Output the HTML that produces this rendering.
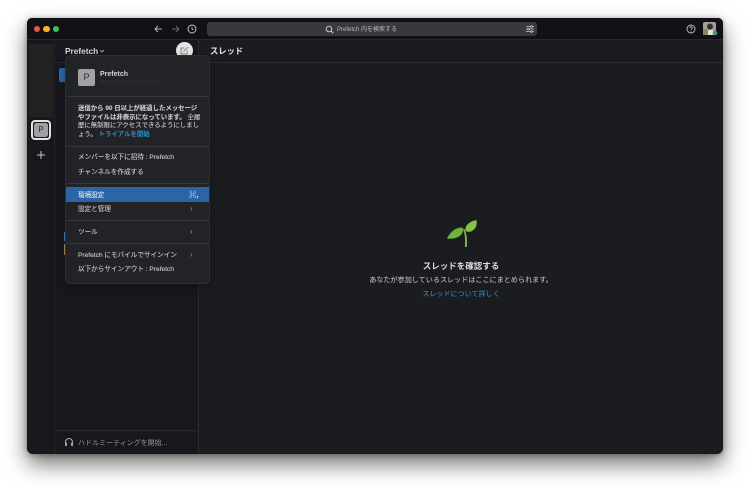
<!DOCTYPE html>
<html lang="ja"><head><meta charset="utf-8"><style>
*{box-sizing:border-box}
html,body{margin:0;padding:0;width:750px;height:489px;overflow:hidden;background:#fff}
body{font-family:"Liberation Sans","Noto Sans CJK JP",sans-serif;position:relative}
.a{position:absolute;white-space:nowrap}
#win{position:absolute;left:27px;top:18px;width:696px;height:436px;background:#1b1c20;border-radius:5px 5px 6px 6px;overflow:hidden;box-shadow:0 10px 22px rgba(0,0,0,.55),0 1px 6px rgba(0,0,0,.35)}
#root{position:absolute;left:0;top:0;width:750px;height:489px;filter:blur(.35px)}
.t{font-size:6.6px;color:#cdcdcf;line-height:10px;-webkit-text-stroke:.1px #cdcdcf}
.sep{position:absolute;left:66px;width:143px;height:1px;background:#35363a}
.ch{position:absolute;left:190px;font-size:8px;color:#9a9a9c;line-height:10px}
</style></head><body><div id="root">
<div id="win"></div>
<div class="a" style="left:27px;top:18px;width:696px;height:21px;background:#111015;border-radius:5px 5px 0 0"></div>
<div class="a" style="left:27px;top:39px;width:171px;height:415px;background:#18171d;border-radius:0 0 0 6px"></div>
<div class="a" style="left:54px;top:39px;width:1px;height:415px;background:#232328"></div>
<div class="a" style="left:198px;top:39px;width:1px;height:415px;background:#2a2b2f"></div>
<div class="a" style="left:27px;top:39px;width:696px;height:1px;background:#29292e"></div>
<div class="a" style="left:199px;top:62px;width:524px;height:1px;background:#2d2e32"></div>
<div class="a" style="left:55px;top:62px;width:143px;height:1px;background:#29292e"></div>
<div class="a" style="left:29px;top:44px;width:24px;height:73px;background:#222320"></div>

<div class="a" style="left:33.500px;top:25.500px;width:6.500px;height:6.500px;border-radius:50%;background:#f0514c"></div>
<div class="a" style="left:43px;top:25.500px;width:6.500px;height:6.500px;border-radius:50%;background:#f3b32b"></div>
<div class="a" style="left:52.500px;top:25.500px;width:6.500px;height:6.500px;border-radius:50%;background:#3fc24c"></div>

<svg class="a" style="left:153px;top:24px" width="50" height="10" viewBox="0 0 50 10" fill="none">
<path d="M9 5H2M5 2L2 5l3 3" stroke="#b5b5b7" stroke-width="1"/>
<path d="M19 5h7M23 2l3 3-3 3" stroke="#66666a" stroke-width="1"/>
<circle cx="39" cy="5" r="4" stroke="#c2c2c4" stroke-width="1"/><path d="M39 2.700V5l1.600 1" stroke="#c2c2c4" stroke-width=".8"/>
</svg>
<div class="a" style="left:207px;top:22px;width:330px;height:14px;border-radius:3px;background:#38393d"></div>
<svg class="a" style="left:325px;top:24.500px" width="9" height="9" viewBox="0 0 9 9" fill="none"><circle cx="4" cy="4" r="2.800" stroke="#c8c8ca"/><path d="M6 6l2.300 2.300" stroke="#c8c8ca"/></svg>
<div class="a" style="left:337px;top:24.500px;font-size:6px;line-height:10px;color:#bcbcbe">Prefetch 内を検索する</div>
<svg class="a" style="left:526px;top:25px" width="8" height="8" viewBox="0 0 8 8" fill="none" stroke="#c4c4c6" stroke-width=".8"><path d="M0 1.500h8M0 4h8M0 6.500h8"/><circle cx="5.500" cy="1.500" r=".9" fill="#38393d"/><circle cx="2.500" cy="4" r=".9" fill="#38393d"/><circle cx="5.500" cy="6.500" r=".9" fill="#38393d"/></svg>

<svg class="a" style="left:686px;top:24px" width="10" height="10" viewBox="0 0 10 10" fill="none"><circle cx="5" cy="5" r="4" stroke="#c4c4c6" stroke-width=".9"/><path d="M3.800 4c0-1.600 2.500-1.600 2.500 0 0 .9-1.300 1-1.300 1.900" stroke="#c4c4c6" stroke-width=".8"/><circle cx="5" cy="7.300" r=".5" fill="#c4c4c6"/></svg>
<svg class="a" style="left:702px;top:22px" width="16" height="15" viewBox="0 0 16 15"><rect x="1" y="0" width="13" height="13" rx="2" fill="#a79a9c"/><rect x="1" y="7" width="6" height="6" fill="#8b8a55"/><circle cx="8" cy="4.500" r="3" fill="#2f3036"/><path d="M6 8h5v5H6z" fill="#e4e2e0"/><circle cx="13" cy="11" r="2.300" fill="#35a569"/></svg>

<div class="a" style="left:65px;top:45px;font-size:8.300px;font-weight:bold;line-height:12px;color:#d8d8da">Prefetch</div>
<svg class="a" style="left:99px;top:49px" width="6" height="5" viewBox="0 0 6 5" fill="none"><path d="M1 1l2 2 2-2" stroke="#bdbdbf" stroke-width=".8"/></svg>
<div class="a" style="left:176px;top:42px;width:17px;height:17px;border-radius:50%;background:#e3e3e3"></div>
<svg class="a" style="left:180px;top:46px" width="9" height="9" viewBox="0 0 9 9" fill="none" stroke="#6a6a6c" stroke-width=".8"><path d="M7 4.500V8H1V2h3.500"/><path d="M3.500 5.500L8 1"/></svg>
<div class="a" style="left:210px;top:45px;font-size:8.300px;font-weight:bold;line-height:12px;color:#e2e2e3">スレッド</div>

<div class="a" style="left:31px;top:120px;width:20px;height:20px;border-radius:4px;border:2px solid #e4e4e4;background:#1b1a20"></div>
<div class="a" style="left:34px;top:123px;width:14px;height:14px;border-radius:2.500px;background:#a0a0a2;color:#2c2c2f;font-size:8px;line-height:14px;text-align:center">P</div>
<svg class="a" style="left:37px;top:151px" width="8" height="8" viewBox="0 0 8 8"><path d="M4 0v8M0 4h8" stroke="#c9c9cb" stroke-width="1"/></svg>

<div class="a" style="left:59px;top:68px;width:8px;height:14px;border-radius:2px 0 0 2px;background:#2c65a6"></div>
<div class="a" style="left:64px;top:232px;width:2px;height:9px;background:#3d7bc0"></div>
<div class="a" style="left:64px;top:244px;width:2px;height:11px;background:#a88e62"></div>

<div class="a" style="left:66px;top:56px;width:143px;height:227px;background:#222327;border-radius:4px;box-shadow:0 0 0 1px #2e2f33,0 3px 8px rgba(0,0,0,.35)"></div>
<div class="a" style="left:78px;top:69px;width:17px;height:17px;border-radius:2px;background:#a2a2a4;color:#2c2c2f;font-size:9px;line-height:17px;text-align:center">P</div>
<div class="a" style="left:100px;top:69.500px;font-size:7px;font-weight:bold;line-height:10px;color:#d6d6d8">Prefetch</div>
<div class="a" style="left:100px;top:80px;width:60px;height:4px;background:#27282b"></div>

<div class="sep" style="top:96px"></div>
<div class="a t" style="left:78px;top:105px;font-weight:bold;font-size:6.400px;line-height:8.600px">送信から 90 日以上が経過したメッセージ<br>やファイルは非表示になっています。 <span style="font-weight:normal">全履</span><br><span style="font-weight:normal">歴に無制限にアクセスできるようにしまし</span><br><span style="font-weight:normal">ょう。</span><span style="color:#2f8fc9;-webkit-text-stroke:0"> トライアルを開始</span></div>

<div class="sep" style="top:146px"></div>
<div class="a t" style="left:78px;top:153px">メンバーを以下に招待 : Prefetch</div>
<div class="a t" style="left:78px;top:168px">チャンネルを作成する</div>
<div class="sep" style="top:183px"></div>
<div class="a" style="left:66px;top:187px;width:143px;height:15px;background:#2c65a6"></div>
<div class="a t" style="left:78px;top:190.500px;color:#e8edf3;-webkit-text-stroke:.1px #e8edf3">環境設定</div>
<div class="a" style="left:189px;top:190px;font-size:7.500px;line-height:10px;color:#e5e9ef;font-weight:bold">⌘,</div>
<div class="a t" style="left:78px;top:204.500px">設定と管理</div>
<div class="ch" style="top:204px">›</div>
<div class="sep" style="top:220px"></div>
<div class="a t" style="left:78px;top:228px">ツール</div>
<div class="ch" style="top:227px">›</div>
<div class="sep" style="top:243px"></div>
<div class="a t" style="left:78px;top:250.500px">Prefetch にモバイルでサインイン</div>
<div class="ch" style="top:249.500px">›</div>
<div class="a t" style="left:78px;top:265px">以下からサインアウト : Prefetch</div>

<svg class="a" style="left:445px;top:218px" width="34" height="32" viewBox="0 0 34 32"><path d="M2 20.500C5 14 11 9 17.500 9.500 19 13 17 17 13 19 9 21 5 21 2 20.500Z" fill="#6fb33a"/><path d="M20.500 13C19.500 8 24 3.500 31.500 2 32.500 7 30.500 11 27 13 25 14 22.500 14 20.500 13Z" fill="#86c24a"/><path d="M18 11c2 5 2.500 12 1.800 18h2c.7-7 0-13-2.300-18Z" fill="#7cb644"/></svg>
<div class="a" style="left:361px;top:259.500px;width:200px;text-align:center;font-size:8.500px;font-weight:bold;line-height:12px;color:#dcdcdd">スレッドを確認する</div>
<div class="a" style="left:361px;top:274.500px;width:200px;text-align:center;font-size:7.100px;line-height:11px;color:#cfcfd1">あなたが参加しているスレッドはここにまとめられます。</div>
<div class="a" style="left:361px;top:288.500px;width:200px;text-align:center;font-size:7.050px;line-height:11px;color:#2f86bd;-webkit-text-stroke:.1px #2f86bd">スレッドについて詳しく</div>

<div class="a" style="left:55px;top:430px;width:143px;height:24px;border-top:1px solid #2a2a2f;border-radius:4px 4px 0 0"></div>
<svg class="a" style="left:64px;top:437px" width="10" height="10" viewBox="0 0 10 10" fill="none"><path d="M1.500 7V5a3.500 3.500 0 0 1 7 0v2" stroke="#a9a9ab"/><rect x="1" y="5.500" width="2" height="3.500" rx=".8" fill="#a9a9ab"/><rect x="7" y="5.500" width="2" height="3.500" rx=".8" fill="#a9a9ab"/></svg>
<div class="a" style="left:78px;top:438px;font-size:7px;line-height:11px;color:#959598">ハドルミーティングを開始...</div>
</div></body></html>
